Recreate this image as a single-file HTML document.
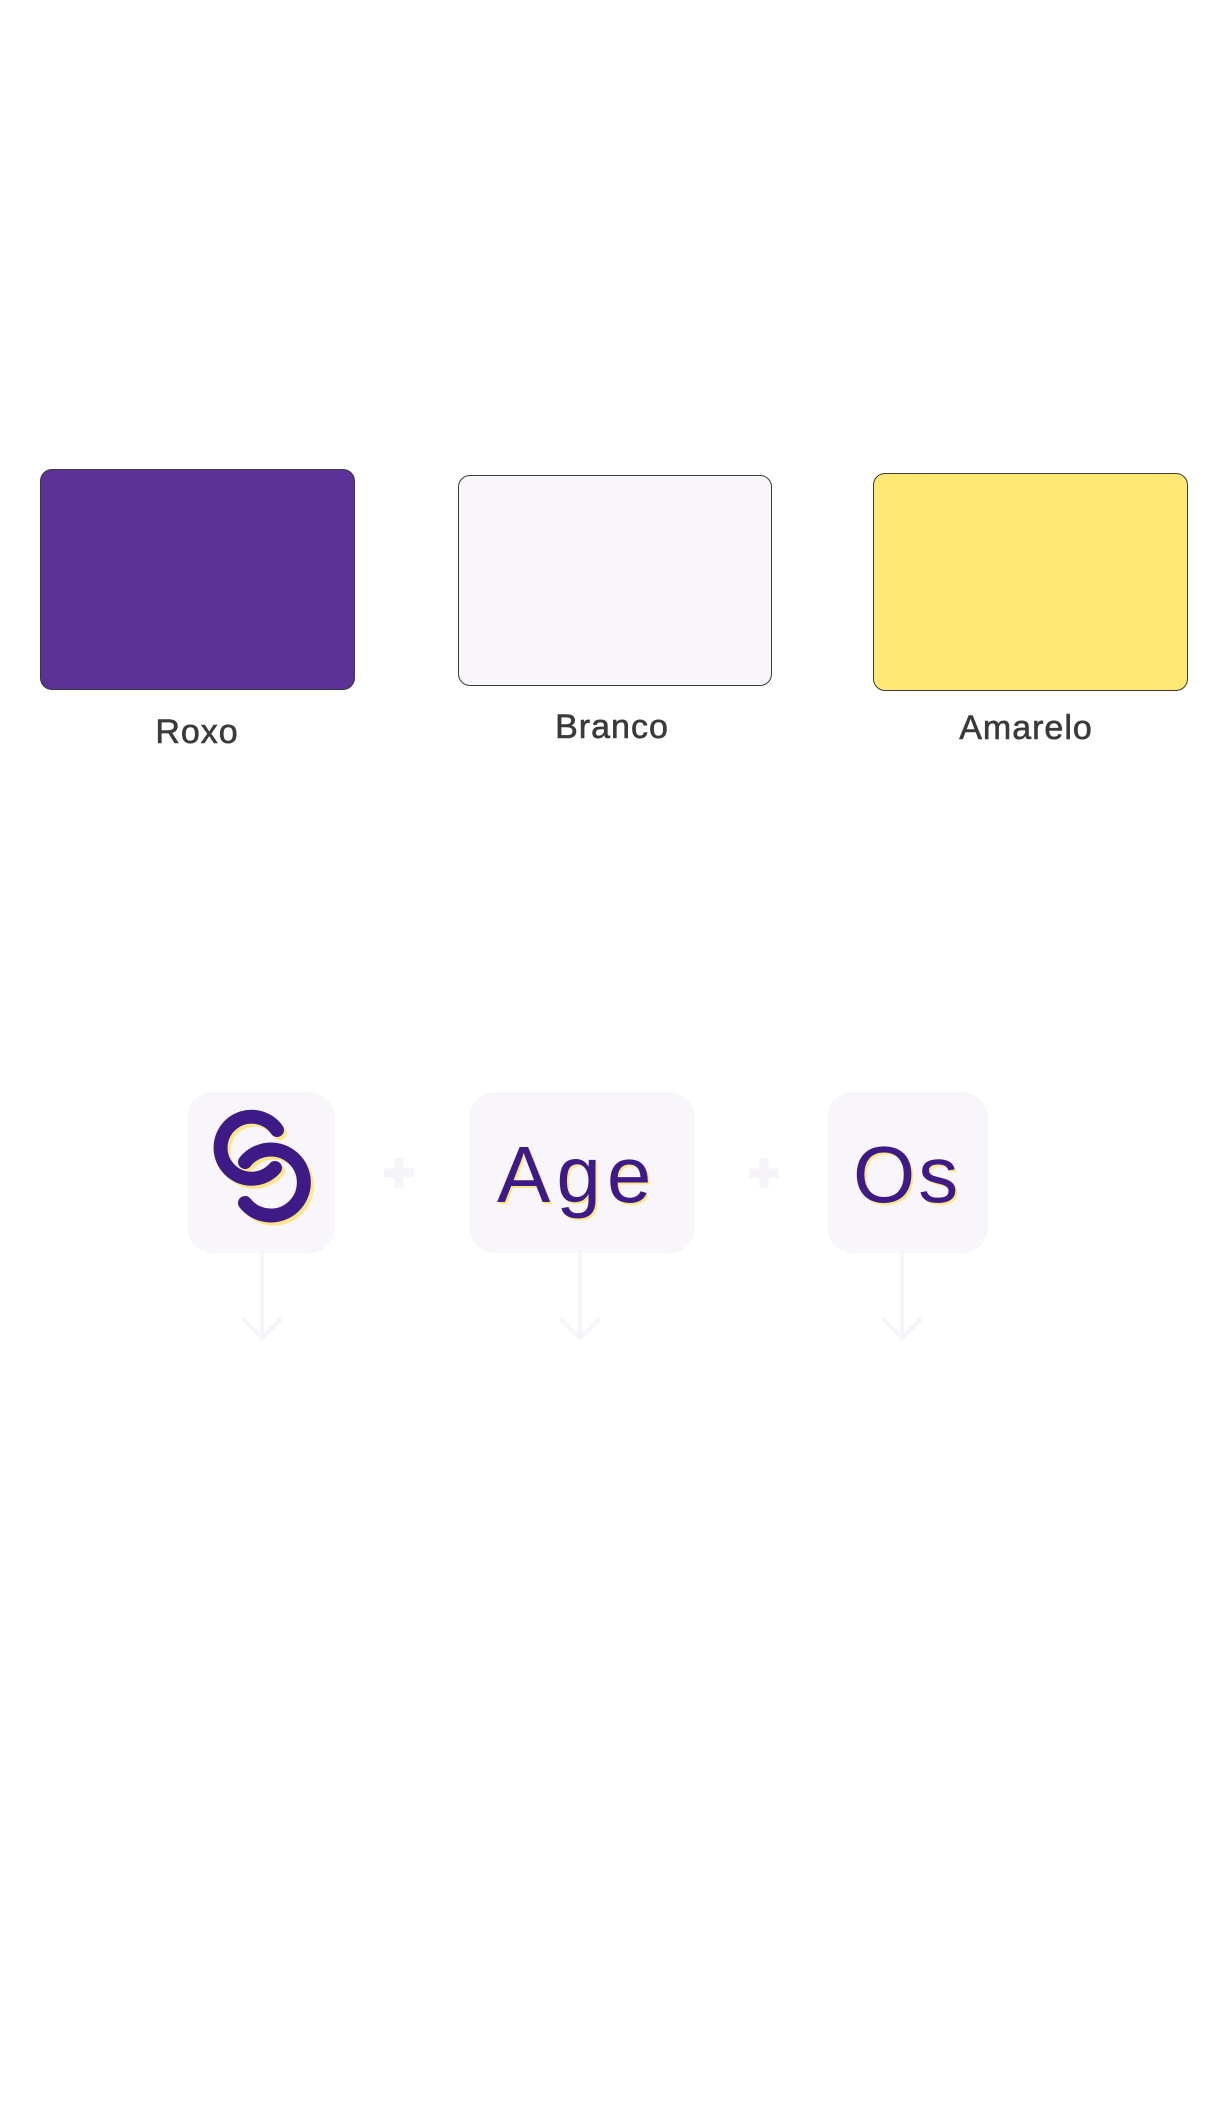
<!DOCTYPE html>
<html><head><meta charset="utf-8"><style>
html,body{margin:0;padding:0;background:#fff;}
body{width:1220px;height:2109px;position:relative;overflow:hidden;font-family:"Liberation Sans",sans-serif;}
.sw{position:absolute;border:1px solid #3a3a3a;border-radius:12px;box-sizing:border-box;}
.lb{position:absolute;font-size:34px;color:#3a3a3a;text-align:center;width:320px;line-height:40px;letter-spacing:1px;-webkit-text-stroke:0.6px #3a3a3a;}
.bx{position:absolute;background:#f8f6fa;border-radius:26px;}
.tx{position:absolute;font-size:80px;color:#3d1a85;text-shadow:2px 2px 0 #fde68a;line-height:1;}
</style></head><body>
<div class="sw" style="left:40px;top:469px;width:315px;height:221px;background:#5e3199;"></div>
<div class="sw" style="left:458px;top:475px;width:314px;height:211px;background:#f8f6fa;"></div>
<div class="sw" style="left:873px;top:473px;width:315px;height:218px;background:#ffe873;"></div>
<div class="lb" style="left:37px;top:712px;">Roxo</div>
<div class="lb" style="left:452px;top:707px;">Branco</div>
<div class="lb" style="left:866px;top:708px;">Amarelo</div>

<div class="bx" style="left:187px;top:1092px;width:148px;height:161px;"></div>
<div class="bx" style="left:469px;top:1092px;width:226px;height:161px;"></div>
<div class="bx" style="left:827px;top:1092px;width:161px;height:161px;"></div>

<svg width="1220" height="2109" style="position:absolute;left:0;top:0" fill="none" stroke-linecap="round">
<g stroke="#fde68a" stroke-width="14" transform="translate(3,3)">
<path d="M277 1130 A31 31 0 1 0 275 1168"/>
<path d="M245 1162 A33 33 0 1 1 245 1203"/>
</g>
<g stroke="#3d1a85" stroke-width="14">
<path d="M277 1130 A31 31 0 1 0 275 1168"/>
<path d="M245 1162 A33 33 0 1 1 245 1203"/>
</g>
<g stroke="#f6f4f8" stroke-width="9" stroke-linecap="butt">
<path d="M399 1158 V1188 M384 1173 H414"/>
<path d="M764 1158 V1188 M749 1173 H779"/>
</g>
<g stroke="#f6f4f8" stroke-width="4">
<path d="M262 1253 V1338 M244 1320 L262 1338 L280 1320"/>
<path d="M580 1253 V1338 M562 1320 L580 1338 L598 1320"/>
<path d="M902 1253 V1338 M884 1320 L902 1338 L920 1320"/>
</g>
</svg>
<div class="tx" style="left:497px;top:1135px;letter-spacing:6px;">Age</div>
<div class="tx" style="left:853px;top:1135px;letter-spacing:3px;">Os</div>
</body></html>
